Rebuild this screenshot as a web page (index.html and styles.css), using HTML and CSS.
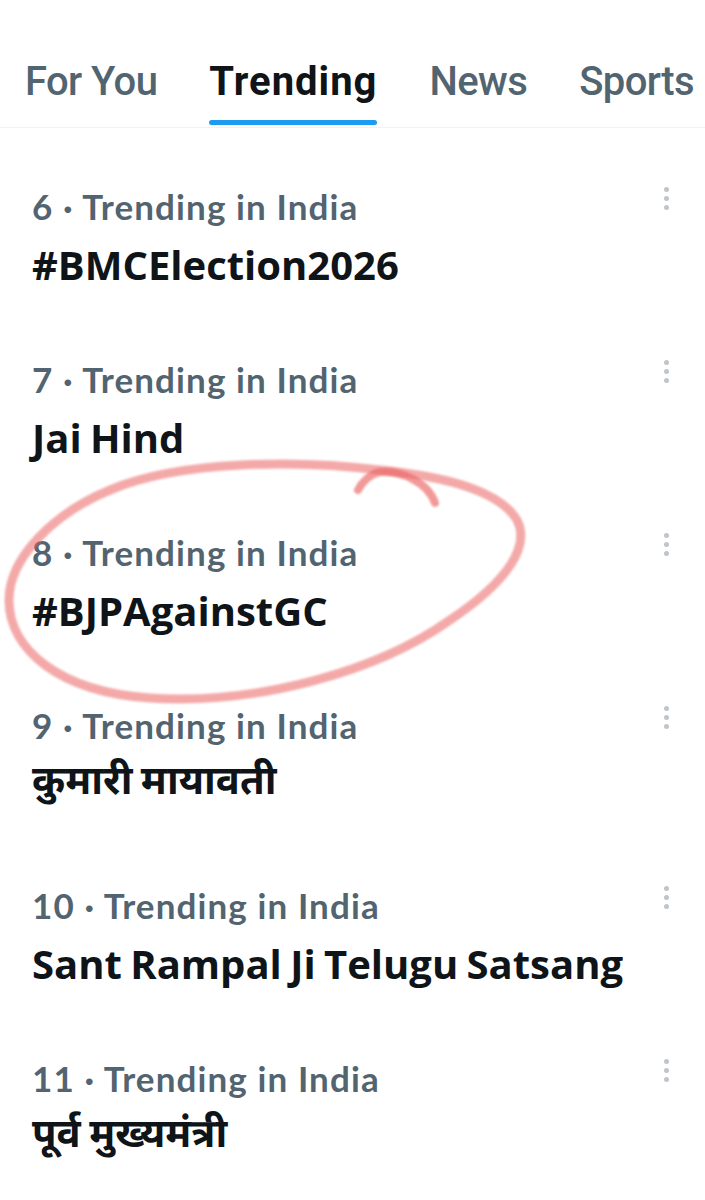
FILE: index.html
```html
<!DOCTYPE html>
<html lang="en">
<head>
    <meta charset="UTF-8">
    <meta name="viewport" content="width=device-width, initial-scale=1.0">
    <title>Explore - Trending</title>
    <link rel="stylesheet" href="styles.css">
</head>
<body>
    <nav class="tabs">
        <a class="tab" href="#">For You</a>
        <a class="tab active" href="#">Trending</a>
        <a class="tab" href="#">News</a>
        <a class="tab" href="#">Sports</a>
    </nav>

    <div class="trends">
        <div class="trend">
            <div class="trend-text">
                <div class="trend-meta">6 · Trending in India</div>
                <div class="trend-name">#BMCElection2026</div>
            </div>
            <span class="more"><i></i><i></i><i></i></span>
        </div>
        <div class="trend">
            <div class="trend-text">
                <div class="trend-meta">7 · Trending in India</div>
                <div class="trend-name">Jai Hind</div>
            </div>
            <span class="more"><i></i><i></i><i></i></span>
        </div>
        <div class="trend">
            <div class="trend-text">
                <div class="trend-meta">8 · Trending in India</div>
                <div class="trend-name">#BJPAgainstGC</div>
            </div>
            <span class="more"><i></i><i></i><i></i></span>
        </div>
        <div class="trend tall">
            <div class="trend-text">
                <div class="trend-meta">9 · Trending in India</div>
                <div class="trend-name hindi">कुमारी मायावती</div>
            </div>
            <span class="more"><i></i><i></i><i></i></span>
        </div>
        <div class="trend">
            <div class="trend-text">
                <div class="trend-meta">10 · Trending in India</div>
                <div class="trend-name">Sant Rampal Ji Telugu Satsang</div>
            </div>
            <span class="more"><i></i><i></i><i></i></span>
        </div>
        <div class="trend tall">
            <div class="trend-text">
                <div class="trend-meta">11 · Trending in India</div>
                <div class="trend-name hindi">पूर्व मुख्यमंत्री</div>
            </div>
            <span class="more"><i></i><i></i><i></i></span>
        </div>
    </div>

    <!-- hand drawn marker circle -->
    <svg class="scribble" width="705" height="1200" viewBox="0 0 705 1200">
        <path d="M 380 470 C 300 460, 180 460, 110 490 C 50 515, 9 560, 9 600 C 9 650, 60 692, 150 698 C 260 705, 380 670, 450 620 C 510 580, 530 545, 517 520 C 502 495, 460 478, 380 470" />
        <path class="hook" d="M 435 503 C 428 482, 400 470, 380 472 C 370 474, 362 482, 358 490" />
    </svg>
</body>
</html>
```

FILE: styles.css
```css
body {
    margin: 0;
    background: #fff;
    font-family: "Lato", "Noto Sans", sans-serif;
    color: #0f1419;
    width: 705px;
    overflow: hidden;
}

.tabs {
    display: flex;
    gap: 52px;
    padding: 58px 0 0 25px;
    height: 69px;
    border-bottom: 1px solid #eff3f4;
    white-space: nowrap;
    overflow: hidden;
}

.tab {
    font-family: "Roboto", sans-serif;
    font-size: 40px;
    font-weight: 500;
    letter-spacing: -0.6px;
    color: #536471;
    text-decoration: none;
    line-height: 48px;
    position: relative;
    height: 69px;
}

.tab.active {
    color: #0f1419;
    font-weight: 700;
    letter-spacing: 1px;
}

.tab.active::after {
    content: "";
    position: absolute;
    left: 0;
    right: 0;
    bottom: 2px;
    height: 5px;
    border-radius: 3px;
    background: #1d9bf0;
}

.trends {
    padding-top: 50px;
}

.trend {
    display: flex;
    justify-content: space-between;
    padding: 0 32px;
    height: 173px;
}

.trend.tall {
    height: 180px;
}

.trend-meta {
    font-family: "Lato", sans-serif;
    font-size: 35px;
    font-weight: 700;
    letter-spacing: 1.1px;
    color: #536471;
    line-height: 56px;
}

.trend-name {
    font-family: "Open Sans", sans-serif;
    font-size: 40px;
    font-weight: 700;
    word-spacing: -2px;
    color: #0f1419;
    line-height: 62px;
}

.trend-name.hindi {
    font-family: "Noto Sans Devanagari", "Noto Sans", sans-serif;
}

.more {
    display: flex;
    flex-direction: column;
    gap: 4px;
    padding-top: 9px;
    margin-right: 4px;
}

.more i {
    width: 5px;
    height: 5px;
    border-radius: 50%;
    background: #bfc5ca;
}

.scribble {
    position: absolute;
    left: 0;
    top: 0;
    pointer-events: none;
}

.scribble path {
    fill: none;
    stroke: #ec6464;
    stroke-width: 9;
    stroke-linecap: round;
    opacity: 0.55;
    filter: blur(1px);
}

.scribble .hook {
    stroke-width: 8;
    opacity: 0.65;
}
```
